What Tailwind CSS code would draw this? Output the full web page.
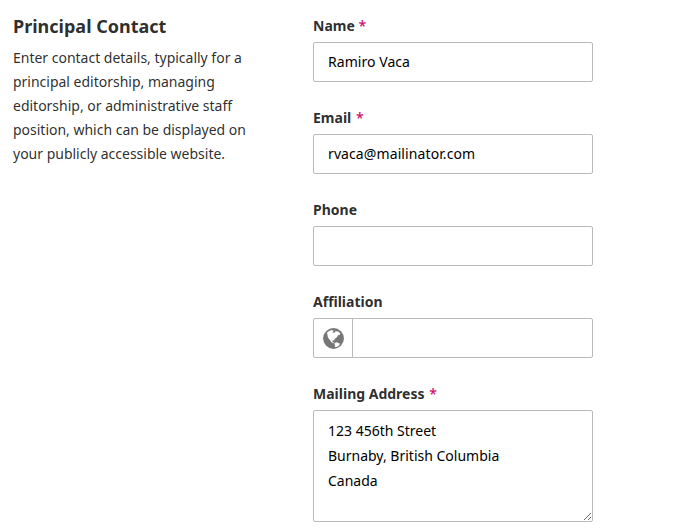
<!DOCTYPE html>
<html lang="en">
<head>
<meta charset="utf-8">
<title>Principal Contact</title>
<script src="https://cdn.jsdelivr.net/npm/@tailwindcss/browser@4"></script>
</head>
<body class="bg-white font-['Noto_Sans',sans-serif] text-sm leading-6 text-[#222]/95 h-[532px] overflow-hidden">
<main class="flex pt-[14px] pl-[13px]">
  <section class="w-[240px] mr-[60px] shrink-0">
    <h2 class="text-lg leading-6 font-bold">Principal Contact</h2>
    <p class="mt-2 tracking-[-0.01px]">Enter contact details, typically for a principal editorship, managing editorship, or administrative staff position, which can be displayed on your publicly accessible website.</p>
  </section>
  <form class="w-[280px] flex flex-col gap-6">
    <div class="flex flex-col gap-1">
      <label for="name" class="font-bold">Name <span class="text-[#d00a6c] font-medium">*</span></label>
      <input id="name" class="h-10 w-full rounded-xs border border-[#bbb] px-[14px] pb-0.5 tracking-[0.05px] text-black outline-none" value="Ramiro Vaca">
    </div>
    <div class="flex flex-col gap-1">
      <label for="email" class="font-bold">Email <span class="ml-px text-[#d00a6c] font-medium">*</span></label>
      <input id="email" class="h-10 w-full rounded-xs border border-[#bbb] px-[14px] pb-0.5 tracking-[0.1px] text-black outline-none" value="rvaca@mailinator.com">
    </div>
    <div class="flex flex-col gap-1">
      <label for="phone" class="font-bold">Phone</label>
      <input id="phone" class="h-10 w-full rounded-xs border border-[#bbb] px-[14px] text-black outline-none">
    </div>
    <div class="flex flex-col gap-1">
      <label for="aff" class="font-bold">Affiliation</label>
      <div class="flex h-10 rounded-xs border border-[#bbb]">
        <span class="flex w-[39px] items-center border-r border-[#bbb] pl-[9px]">
          <svg class="size-[21px]" viewBox="0 0 21 21"><circle cx="10.5" cy="10.5" r="10.4" fill="#777"/><path fill="#fff" d="M4 4.500 6.200 3l2.500-.9 2 .6-1.200 1.500 1.500.700 1.500-1.700 2.600.3 2.100 1.700-.3 1.500-1.900.5-1.100 2-1.900 1.300-.8 1.900-1.100-.2-.9 1 .7 1 1.300.3-.2.700-2.400-.8-1.700-2.400-1.900-2.300-.5-2.600z"/><path fill="#fff" d="m11.800 14.900 1.900-.6 1.700.8 1.600.7-1.200 1.900-2.200 1.200-1.900.2.500-1.900-.900-1.100z"/></svg>
        </span>
        <input id="aff" class="min-w-0 flex-1 px-[14px] text-black outline-none">
      </div>
    </div>
    <div class="flex flex-col gap-1">
      <label for="mail" class="font-bold">Mailing Address <span class="ml-px text-[#d00a6c] font-medium">*</span></label>
      <textarea id="mail" class="h-28 w-full resize rounded-xs border border-[#bbb] px-[14px] py-[7px] leading-[25px] text-black outline-none">123 456th Street
Burnaby, British Columbia
Canada</textarea>
    </div>
  </form>
</main>
</body>
</html>
